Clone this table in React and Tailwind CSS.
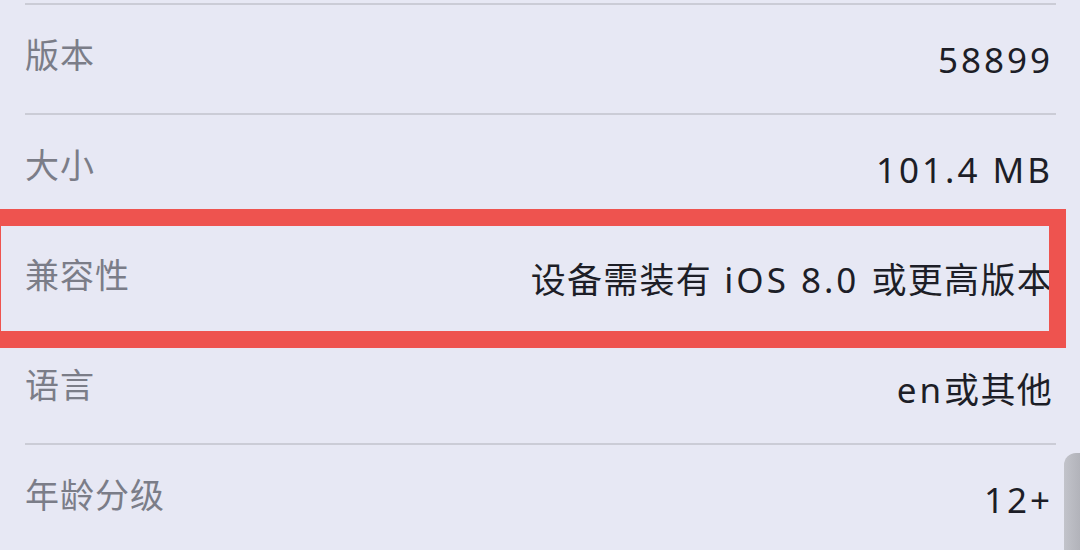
import React from 'react';

const rows = [
    { label: '版本', value: '58899' },
    { label: '大小', value: '101.4 MB' },
    { label: '兼容性', value: '设备需装有 iOS 8.0 或更高版本' },
    { label: '语言', value: 'en或其他' },
    { label: '年龄分级', value: '12+' },
];

// latin runs are set a bit looser than the chinese ones
function Value({ text }) {
    const parts = text.split(/([\u4e00-\u9fff]+)/).filter(Boolean);
    return (
        <span className="pr-[3px] text-[35px] leading-none text-[#1d1e27]">
            {parts.map((p, i) =>
                /[\u4e00-\u9fff]/.test(p) ? (
                    <span key={i} className="tracking-[1.3px]">{p}</span>
                ) : (
                    <span key={i} className="tracking-[3px]">{p}</span>
                )
            )}
        </span>
    );
}

export default function App() {
    return (
        <div
            className="relative w-[1080px] h-[550px] overflow-hidden bg-[#e7e8f4]"
            style={{ fontFamily: '"Noto Sans", "Noto Sans CJK SC", sans-serif' }}
        >
            <div className="ml-[25px] w-[1031px] mt-[3px] border-t-2 border-[#cbccd6]">
                {rows.map((row) => (
                    <div
                        key={row.label}
                        className="flex items-center justify-between h-[110px] border-b-2 border-[#cbccd6]"
                    >
                        <span className="mb-2 text-[34px] leading-none text-[#7b7d88] tracking-[1px]">
                            {row.label}
                        </span>
                        <Value text={row.value} />
                    </div>
                ))}
            </div>

            {/* highlight box */}
            <div className="absolute left-[-16px] top-[209px] w-[1082px] h-[139px] border-[17px] border-[#ee534f]" />

            {/* scroll indicator */}
            <div className="absolute left-[1064px] top-[453px] w-[20px] h-[120px] rounded-tl-[12px] bg-gradient-to-r from-[#c2c3ca] to-[#aeafb6]" />
        </div>
    );
}
